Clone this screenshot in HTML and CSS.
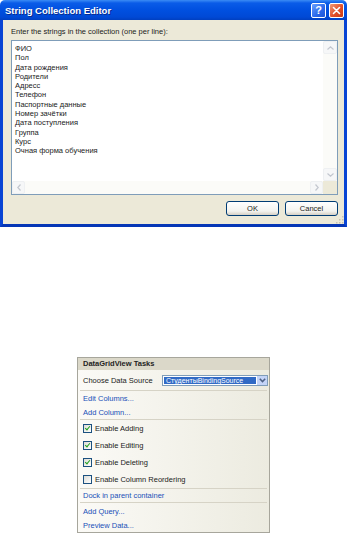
FILE: index.html
```html
<!DOCTYPE html>
<html lang="en">
<head>
  <meta charset="UTF-8">
  <meta name="viewport" content="width=device-width, initial-scale=1.0">
  <title>String Collection Editor</title>
  <link rel="stylesheet" href="styles.css">
</head>
<body>
  <div class="dialog">
    <div class="titlebar">
      <span class="title">String Collection Editor</span>
      <div class="title-buttons">
        <span class="tbtn tbtn-help">?</span>
        <span class="tbtn tbtn-close">
          <svg width="9" height="9" viewBox="0 0 9 9"><path d="M1.5 1.5 L7.5 7.5 M7.5 1.5 L1.5 7.5" stroke="#fff" stroke-width="1.6" stroke-linecap="round"/></svg>
        </span>
      </div>
    </div>
    <div class="dialog-body">
      <div class="prompt">Enter the strings in the collection (one per line):</div>
      <div class="editbox">
        <div class="lines">
          <div>ФИО</div>
          <div>Пол</div>
          <div>Дата рождения</div>
          <div>Родители</div>
          <div>Адресс</div>
          <div>Телефон</div>
          <div>Паспортные данные</div>
          <div>Номер зачётки</div>
          <div>Дата поступления</div>
          <div>Группа</div>
          <div>Курс</div>
          <div>Очная форма обучения</div>
        </div>
        <div class="vscroll">
          <span class="sbtn"><svg width="7" height="4" viewBox="0 0 7 4"><path d="M0.5 3.5 L3.5 0.8 L6.5 3.5" fill="none" stroke="#c3c7cf" stroke-width="1.2"/></svg></span>
          <span class="sbtn"><svg width="7" height="4" viewBox="0 0 7 4"><path d="M0.5 0.5 L3.5 3.2 L6.5 0.5" fill="none" stroke="#c3c7cf" stroke-width="1.2"/></svg></span>
        </div>
        <div class="hscroll">
          <span class="sbtn"><svg width="4" height="7" viewBox="0 0 4 7"><path d="M3.5 0.5 L0.8 3.5 L3.5 6.5" fill="none" stroke="#c3c7cf" stroke-width="1.2"/></svg></span>
          <span class="sbtn"><svg width="4" height="7" viewBox="0 0 4 7"><path d="M0.5 0.5 L3.2 3.5 L0.5 6.5" fill="none" stroke="#c3c7cf" stroke-width="1.2"/></svg></span>
        </div>
        <div class="corner"></div>
      </div>
      <div class="actions">
        <button class="xp-button">OK</button>
        <button class="xp-button">Cancel</button>
      </div>
      <svg class="grip" width="9" height="9" viewBox="0 0 9 9">
        <rect x="7" y="1" width="1.5" height="1.5" fill="#c6c2b2"/>
        <rect x="4" y="4" width="1.5" height="1.5" fill="#c6c2b2"/>
        <rect x="7" y="4" width="1.5" height="1.5" fill="#c6c2b2"/>
        <rect x="1" y="7" width="1.5" height="1.5" fill="#c6c2b2"/>
        <rect x="4" y="7" width="1.5" height="1.5" fill="#c6c2b2"/>
        <rect x="7" y="7" width="1.5" height="1.5" fill="#c6c2b2"/>
      </svg>
    </div>
  </div>

  <div class="tasks">
    <div class="tasks-header">DataGridView Tasks</div>
    <div class="tasks-row source-row">
      <span>Choose Data Source</span>
      <div class="combo">
        <span class="combo-value">СтудентыBindingSource</span>
        <span class="combo-arrow">
          <svg width="7" height="5" viewBox="0 0 7 5"><path d="M0.8 0.8 L3.5 3.6 L6.2 0.8" fill="none" stroke="#4d6185" stroke-width="1.5"/></svg>
        </span>
      </div>
    </div>
    <div class="sep"></div>
    <div class="tasks-row link-row"><a>Edit Columns...</a></div>
    <div class="tasks-row link-row"><a>Add Column...</a></div>
    <div class="sep"></div>
    <div class="tasks-row check-row"><span class="check on"></span>Enable Adding</div>
    <div class="tasks-row check-row"><span class="check on"></span>Enable Editing</div>
    <div class="tasks-row check-row"><span class="check on"></span>Enable Deleting</div>
    <div class="tasks-row check-row"><span class="check"></span>Enable Column Reordering</div>
    <div class="sep"></div>
    <div class="tasks-row dock-row"><a>Dock in parent container</a></div>
    <div class="sep"></div>
    <div class="tasks-row query-row"><a>Add Query...</a></div>
    <div class="tasks-row preview-row"><a>Preview Data...</a></div>
  </div>
</body>
</html>
```

FILE: styles.css
```css
body {
  margin: 0;
  background: #fff;
  font-family: 'Liberation Sans', Arial, sans-serif;
  font-size: 7.5px;
  color: #222;
}

/* dialog */
.dialog {
  width: 347px;
}
.titlebar {
  height: 20px;
  display: flex;
  justify-content: space-between;
  align-items: center;
  padding: 0 3px 0 5px;
  border-radius: 5px 5px 0 0;
  background: linear-gradient(#3b8cf5 0%, #0a5ce8 15%, #0050e0 50%, #0049d6 85%, #003fc0 100%);
}
.title {
  color: #fff;
  font-weight: bold;
  font-size: 9.5px;
  text-shadow: 1px 1px 0 #0a2c8c;
}
.title-buttons {
  display: flex;
  gap: 3px;
}
.tbtn {
  width: 13px;
  height: 13px;
  border: 1px solid #fff;
  border-radius: 2px;
  display: flex;
  align-items: center;
  justify-content: center;
  color: #fff;
  font-weight: bold;
  font-size: 11px;
}
.tbtn-help {
  background: linear-gradient(135deg, #6aa0ff, #2a68ea 60%, #1d55d6);
}
.tbtn-close {
  background: linear-gradient(135deg, #f09a78, #e2502a 55%, #c83a12);
}
.dialog-body {
  position: relative;
  height: 207px;
  box-sizing: border-box;
  border: 3px solid #0844d4;
  border-top: none;
  border-bottom-color: #0536b6;
  background: #ece9d8;
  padding: 6px 6px 0 8px;
}
.prompt {
  height: 11px;
  line-height: 11px;
  margin-bottom: 3px;
}
.editbox {
  height: 155px;
  box-sizing: border-box;
  border: 1px solid #7f9db9;
  background: #fff;
  display: grid;
  grid-template-columns: 1fr 14px;
  grid-template-rows: 1fr 13px;
}
.lines {
  padding: 3px 3px;
  line-height: 9.3px;
}
.vscroll {
  background: #fbfbf8;
  display: flex;
  flex-direction: column;
  justify-content: space-between;
}
.hscroll {
  background: #fbfbf8;
  display: flex;
  justify-content: space-between;
}
.sbtn {
  width: 13px;
  height: 13px;
  box-sizing: border-box;
  border: 1px solid #eef0f2;
  border-radius: 2px;
  background: #f6f7f8;
  display: flex;
  align-items: center;
  justify-content: center;
}
.vscroll .sbtn {
  width: 14px;
}
.corner {
  background: #ece9d8;
}
.actions {
  display: flex;
  justify-content: flex-end;
  gap: 6px;
  margin-top: 6px;
}
.xp-button {
  width: 53px;
  height: 15px;
  padding: 0;
  border: 1px solid #003c74;
  border-radius: 3px;
  background: linear-gradient(#fff, #f3f3ef 70%, #d6d0c5);
  font-family: inherit;
  font-size: 7.5px;
  color: #222;
}
.grip {
  position: absolute;
  right: 0;
  bottom: 0;
}

/* smart tag panel */
.tasks {
  width: 193px;
  box-sizing: border-box;
  margin: 130px 0 0 77px;
  border: 1px solid #a7a69c;
  background: linear-gradient(to right, #fbfaf6, #ecead f);
  background: linear-gradient(to right, #fbfaf6, #ecebe0);
}
.tasks-header {
  height: 12px;
  line-height: 12px;
  padding-left: 5px;
  background: #dbd8c9;
  font-weight: bold;
  color: #1e1e1e;
}
.tasks-row {
  display: flex;
  align-items: center;
  padding-left: 5px;
}
.source-row {
  height: 20px;
  justify-content: space-between;
  padding-right: 1px;
}
.combo {
  width: 106px;
  height: 11px;
  box-sizing: border-box;
  border: 1px solid #7f9db9;
  background: #fff;
  display: flex;
}
.combo-value {
  flex: 1;
  margin: 1px;
  background: #316ac5;
  color: #fff;
  line-height: 7px;
  padding-left: 2px;
  font-size: 7px;
}
.combo-arrow {
  width: 10px;
  background: #c4d4f8;
  display: flex;
  align-items: center;
  justify-content: center;
}
.sep {
  height: 1px;
  margin: 0 2px;
  background: #d6d3c6;
}
.tasks a {
  color: #2150b8;
}
.link-row {
  height: 14px;
}
.check-row {
  height: 17px;
  gap: 3px;
}
.check {
  width: 9px;
  height: 9px;
  box-sizing: border-box;
  border: 1px solid #1c5180;
  background: linear-gradient(135deg, #dcdcd6, #fff);
  position: relative;
}
.check.on::after {
  content: "";
  position: absolute;
  left: 2px;
  top: 0px;
  width: 2px;
  height: 4px;
  border: solid #21a121;
  border-width: 0 1.5px 1.5px 0;
  transform: rotate(40deg);
}
.dock-row {
  height: 13px;
}
.query-row {
  height: 16px;
}
.preview-row {
  height: 13px;
}
```
